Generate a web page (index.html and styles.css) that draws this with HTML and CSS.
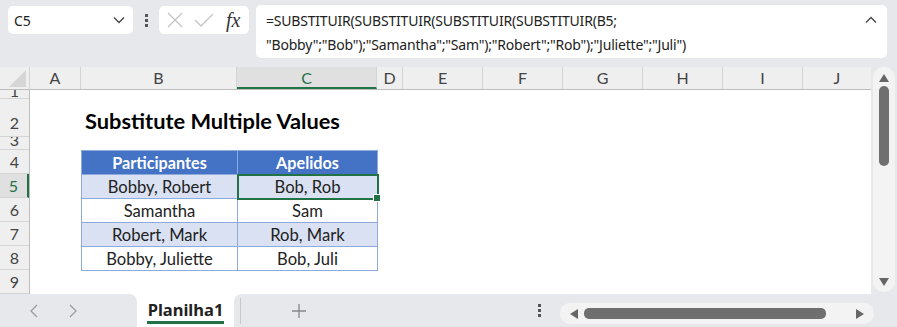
FILE: index.html
```html
<!DOCTYPE html>
<html lang="pt">
<head>
  <meta charset="UTF-8" />
  <title>Planilha1</title>
  <link rel="stylesheet" href="styles.css">
</head>
<body>
  <div class="app">

    <div class="toolbar">
      <div class="namebox">
        <span>C5</span>
        <svg width="12" height="8" viewBox="0 0 12 8"><path d="M1 1.5 L6 6.5 L11 1.5" fill="none" stroke="#444" stroke-width="1.3"/></svg>
      </div>
      <div class="vdots"><i></i><i></i><i></i></div>
      <div class="fxbox">
        <svg width="16" height="16" viewBox="0 0 16 16"><path d="M1 1 L15 15 M15 1 L1 15" stroke="#c4c4c4" stroke-width="1.3"/></svg>
        <svg width="20" height="16" viewBox="0 0 20 16"><path d="M1 8 L7 14 L19 2" fill="none" stroke="#c4c4c4" stroke-width="1.3"/></svg>
        <span class="fx">fx</span>
      </div>
      <div class="formula">
        <div class="formula-text">=SUBSTITUIR(SUBSTITUIR(SUBSTITUIR(SUBSTITUIR(B5;<br>"Bobby";"Bob");"Samantha";"Sam");"Robert";"Rob");"Juliette";"Juli")</div>
        <svg class="caret" width="12" height="8" viewBox="0 0 12 8"><path d="M1 6.5 L6 1.5 L11 6.5" fill="none" stroke="#444" stroke-width="1.3"/></svg>
      </div>
    </div>

    <div class="sheet">
      <div class="grid">
        <div class="corner"><svg width="18" height="17" viewBox="0 0 18 17"><path d="M17 0 L17 17 L0 17 Z" fill="#d6d6d6"/></svg></div>
        <div class="colheads">
          <div class="ch w-a">A</div>
          <div class="ch w-b">B</div>
          <div class="ch w-c sel">C</div>
          <div class="ch w-d">D</div>
          <div class="ch w-e">E</div>
          <div class="ch w-e">F</div>
          <div class="ch w-e">G</div>
          <div class="ch w-e">H</div>
          <div class="ch w-e">I</div>
          <div class="ch w-j">J</div>
        </div>
        <div class="rowheads">
          <div class="rh h1">1</div>
          <div class="rh h2">2</div>
          <div class="rh h3">3</div>
          <div class="rh">4</div>
          <div class="rh sel">5</div>
          <div class="rh">6</div>
          <div class="rh">7</div>
          <div class="rh">8</div>
          <div class="rh">9</div>
        </div>
        <div class="cells">
          <div class="title">Substitute Multiple Values</div>
          <table class="data">
            <thead>
              <tr><th>Participantes</th><th>Apelidos</th></tr>
            </thead>
            <tbody>
              <tr class="band"><td>Bobby, Robert</td><td class="active">Bob, Rob<span class="handle"></span></td></tr>
              <tr><td>Samantha</td><td>Sam</td></tr>
              <tr class="band"><td>Robert, Mark</td><td>Rob, Mark</td></tr>
              <tr><td>Bobby, Juliette</td><td>Bob, Juli</td></tr>
            </tbody>
          </table>
        </div>
      </div>
      <div class="vscroll">
        <svg width="10" height="8" viewBox="0 0 10 8"><path d="M5 0 L10 8 L0 8 Z" fill="#666"/></svg>
        <div class="vthumb"></div>
        <div class="spacer"></div>
        <svg width="10" height="8" viewBox="0 0 10 8"><path d="M0 0 L10 0 L5 8 Z" fill="#666"/></svg>
      </div>
    </div>

    <div class="tabbar">
      <div class="tabnav">
        <svg width="10" height="14" viewBox="0 0 10 14"><path d="M8 1 L2 7 L8 13" fill="none" stroke="#999" stroke-width="1.2"/></svg>
        <svg width="10" height="14" viewBox="0 0 10 14"><path d="M2 1 L8 7 L2 13" fill="none" stroke="#999" stroke-width="1.2"/></svg>
      </div>
      <div class="tab">Planilha1</div>
      <div class="tabrest">
        <div class="tabadd">
          <span class="tabsep"></span>
          <svg width="16" height="16" viewBox="0 0 16 16"><path d="M8 1 L8 15 M1 8 L15 8" stroke="#888" stroke-width="1.3"/></svg>
        </div>
        <div class="hdots"><i></i><i></i><i></i></div>
        <div class="hscroll">
          <svg width="8" height="10" viewBox="0 0 8 10"><path d="M8 0 L8 10 L0 5 Z" fill="#666"/></svg>
          <div class="hthumb"></div>
          <svg width="8" height="10" viewBox="0 0 8 10"><path d="M0 0 L8 5 L0 10 Z" fill="#666"/></svg>
        </div>
      </div>
    </div>

  </div>
</body>
</html>
```

FILE: styles.css
```css
:root {
  --chrome: #e7e8ec;
  --head: #efefef;
  --head-sel: #e0e0e0;
  --head-line: #d4d4d4;
  --green: #217346;
  --blue: #4472c4;
  --band: #d9e1f2;
  --tline: #8eaadb;
}

body {
  margin: 0;
  background: var(--chrome);
}

.app {
  width: 897px;
  height: 327px;
  background: var(--chrome);
  overflow: hidden;
  font-family: "Noto Sans", "Open Sans", sans-serif;
  color: #222;
}

/* formula bar */
.toolbar {
  height: 67px;
  display: flex;
  align-items: flex-start;
  padding: 5px 8px 0 8px;
  box-sizing: border-box;
}

.namebox {
  width: 125px;
  height: 28px;
  margin-top: 1px;
  background: #fff;
  border-radius: 5px;
  display: flex;
  align-items: center;
  justify-content: space-between;
  padding: 0 8px 0 6px;
  box-sizing: border-box;
  font-size: 14px;
}

.vdots {
  width: 26px;
  height: 30px;
  display: flex;
  flex-direction: column;
  align-items: center;
  justify-content: center;
  gap: 2px;
}

.vdots i, .hdots i {
  display: block;
  width: 3px;
  height: 3px;
  background: #555;
}

.fxbox {
  width: 90px;
  height: 28px;
  margin-top: 1px;
  background: #fff;
  border-radius: 5px;
  display: flex;
  align-items: center;
  gap: 11px;
  padding-left: 8px;
  box-sizing: border-box;
}

.fx {
  font-family: "Liberation Serif", serif;
  font-style: italic;
  font-size: 20px;
  color: #333;
  margin-left: 1px;
}

.formula {
  flex: 1;
  height: 53px;
  margin-left: 7px;
  margin-right: 2px;
  background: #fff;
  border-radius: 5px;
  display: flex;
  justify-content: space-between;
  padding: 4px 10px 0 10px;
  box-sizing: border-box;
}

.formula-text {
  font-size: 14px;
  line-height: 24px;
  letter-spacing: -0.2px;
}

.caret {
  margin-top: 7px;
}

/* sheet */
.sheet {
  display: flex;
  height: 227px;
}

.grid {
  width: 871px;
  display: grid;
  grid-template-columns: 30px 1fr;
  grid-template-rows: 23px 1fr;
  font-family: "Lato", sans-serif;
}

.corner {
  background: var(--head);
  border-right: 1px solid var(--head-line);
  border-bottom: 1px solid #bdbdbd;
  box-sizing: border-box;
  display: flex;
  align-items: flex-end;
  justify-content: flex-end;
  padding: 0 2px 2px 0;
}

.colheads {
  display: flex;
  background: var(--head);
  border-bottom: 1px solid #bdbdbd;
  box-sizing: border-box;
}

.ch {
  border-right: 1px solid var(--head-line);
  box-sizing: border-box;
  text-align: center;
  font-size: 16px;
  line-height: 22px;
  color: #444;
}

.ch.sel {
  background: var(--head-sel);
  color: var(--green);
  border-bottom: 2px solid var(--green);
}

.w-a { width: 51px; }
.w-b { width: 156px; }
.w-c { width: 140px; }
.w-d { width: 26px; }
.w-e { width: 80px; }
.w-j { flex: 1; border-right: none; }

.rowheads {
  background: var(--head);
  border-right: 1px solid #bdbdbd;
  display: flex;
  flex-direction: column;
}

.rh {
  height: 24px;
  flex: none;
  border-bottom: 1px solid var(--head-line);
  box-sizing: border-box;
  text-align: center;
  font-size: 16px;
  line-height: 23px;
  color: #444;
  overflow: hidden;
}

.rh.h1 { height: 9px; line-height: 1px; }
.rh.h2 { height: 38px; line-height: 24px; padding-top: 12px; }
.rh.h3 { height: 13px; line-height: 6px; }

.rh.sel {
  background: var(--head-sel);
  color: var(--green);
  border-right: 2px solid var(--green);
}

.cells {
  background: #fff;
  padding-left: 51px;
}

.title {
  height: 60px;
  padding: 10px 0 0 4px;
  box-sizing: border-box;
  font-size: 21.8px;
  font-weight: bold;
  line-height: 42px;
  color: #000;
}

.data {
  border-collapse: collapse;
  font-size: 16.6px;
}

.data th, .data td {
  height: 24px;
  padding: 0;
  border: 1px solid var(--tline);
  text-align: center;
  box-sizing: border-box;
  line-height: 22px;
}

.data th {
  background: var(--blue);
  color: #fff;
  font-weight: bold;
  font-size: 16.2px;
}

.data th:first-child, .data td:first-child { width: 156px; }
.data th:last-child, .data td:last-child { width: 140px; }

.data tr.band td {
  background: var(--band);
}

.data td.active {
  position: relative;
  outline: 2px solid var(--green);
  outline-offset: -1px;
}

.handle {
  position: absolute;
  right: -4px;
  bottom: -4px;
  width: 6px;
  height: 6px;
  background: var(--green);
  border: 1px solid #fff;
}

/* scrollbars */
.vscroll {
  flex: 1;
  margin: 0 2px 2px 2px;
  background: #f3f3f3;
  border-radius: 10px;
  display: flex;
  flex-direction: column;
  align-items: center;
  padding: 7px 0 6px;
  box-sizing: border-box;
}

.vthumb {
  width: 10px;
  height: 80px;
  margin-top: 4px;
  background: #6f6f6f;
  border-radius: 5px;
}

.spacer { flex: 1; }

/* sheet tabs */
.tabbar {
  height: 33px;
  display: flex;
  align-items: stretch;
  background: #fff;
}

.tabnav {
  width: 137px;
  background: var(--chrome);
  border-top-right-radius: 8px;
  display: flex;
  align-items: center;
  gap: 29px;
  padding-left: 29px;
  box-sizing: border-box;
}

.tab {
  width: 97px;
  background: #fff;
  font-family: "Noto Sans", sans-serif;
  font-weight: bold;
  font-size: 16.5px;
  text-align: center;
  line-height: 31px;
  color: #222;
  position: relative;
}

.tab::after {
  content: "";
  position: absolute;
  left: 10px;
  right: 10px;
  bottom: 3px;
  height: 3px;
  background: var(--green);
}

.tabrest {
  flex: 1;
  background: var(--chrome);
  border-top-left-radius: 8px;
  display: flex;
  align-items: stretch;
}

.tabadd {
  width: 100px;
  display: flex;
  align-items: center;
  gap: 50px;
  padding-left: 6px;
}

.tabsep {
  width: 1px;
  height: 26px;
  background: #c8c8c8;
}

.hdots {
  width: 16px;
  margin-left: 198px;
  display: flex;
  flex-direction: column;
  justify-content: center;
  gap: 2px;
}

.hscroll {
  width: 314px;
  height: 21px;
  margin-top: 9px;
  margin-left: 6px;
  background: #f3f3f3;
  border-radius: 10px;
  display: flex;
  align-items: center;
  padding: 0 10px;
  box-sizing: border-box;
  gap: 6px;
}

.hthumb {
  width: 242px;
  height: 11px;
  background: #6f6f6f;
  border-radius: 5px;
  margin-right: auto;
}
```
